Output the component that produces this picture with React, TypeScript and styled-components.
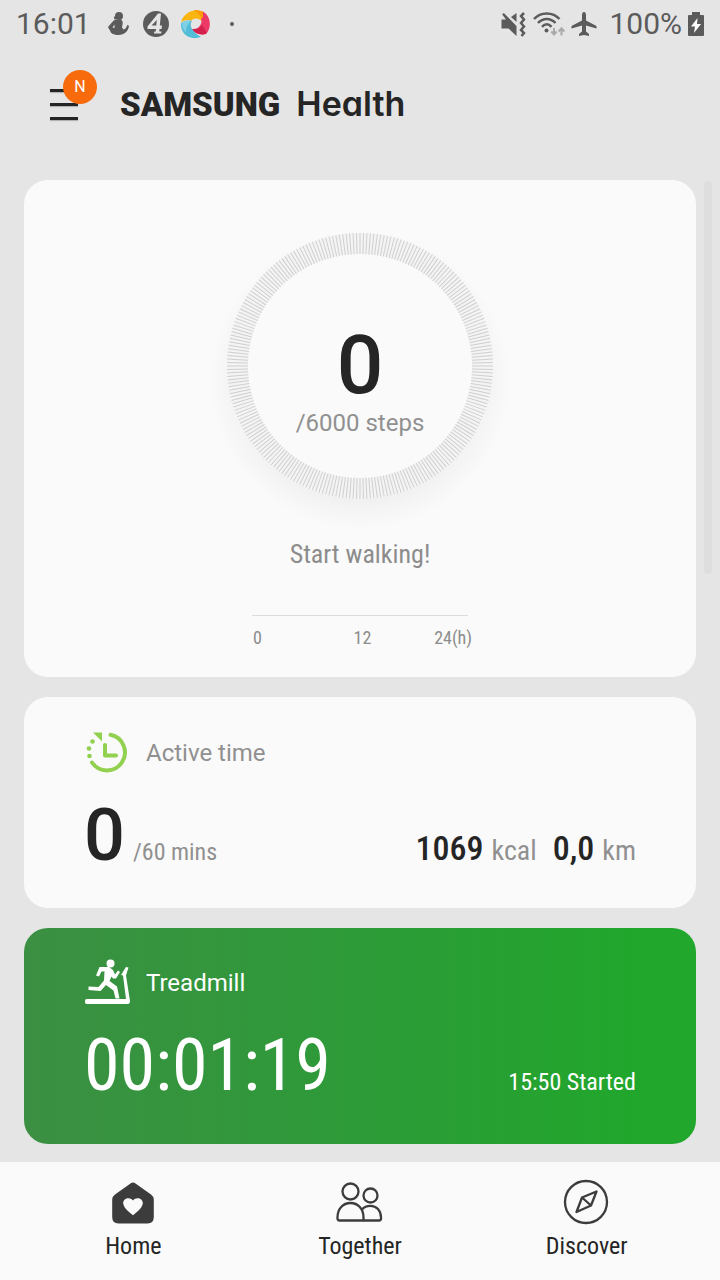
import React from "react";
import styled, { createGlobalStyle } from "styled-components";

const SANS = 'Roboto, "Liberation Sans", sans-serif';
const CONDENSED = '"Roboto Condensed", Roboto, sans-serif';

const GlobalStyle = createGlobalStyle`
  *, *::before, *::after { box-sizing: border-box; }
  body {
    margin: 0;
    background: #e5e5e5;
    color: #252525;
    font-family: ${SANS};
  }
  h1, h2, p { margin: 0; font-weight: 400; }
`;

const Screen = styled.div`
  position: relative;
  display: flex;
  flex-direction: column;
  min-height: 100vh;
`;

const StatusBar = styled.div`
  display: flex;
  align-items: center;
  justify-content: space-between;
  height: 48px;
  padding: 0 16px;
  color: #5b5b5b;
  font-size: 30px;
  line-height: 48px;
`;

const StatusGroup = styled.div<{ $gap: number }>`
  display: flex;
  align-items: center;
  gap: ${(p) => p.$gap}px;
`;

const Clock = styled.time`
  margin-right: 4px;
`;

const ChargeLevel = styled.span`
  margin-left: 6px;
`;

const Icon = styled.svg`
  display: block;
  flex: none;
  overflow: visible;
`;

const Header = styled.header`
  display: flex;
  align-items: center;
  gap: 24px;
  height: 112px;
  padding-left: 48px;
`;

const MenuButton = styled.button`
  position: relative;
  width: 48px;
  height: 48px;
  padding: 0;
  border: 0;
  background: none;
`;

const MenuLine = styled.span`
  display: block;
  width: 28px;
  height: 3px;
  margin: 0 0 11px 2px;
  background: #252525;
  box-shadow: 0 1px 1px rgba(0, 0, 0, 0.25);

  &:nth-of-type(3) { margin-bottom: 0; }
`;

const Badge = styled.span`
  position: absolute;
  top: -10px;
  left: 15px;
  width: 34px;
  height: 34px;
  border-radius: 50%;
  background: #f76b0d;
  color: #fff;
  font: 400 16px/34px ${SANS};
  text-align: center;
`;

const Brand = styled.h1`
  display: flex;
  align-items: baseline;
  gap: 16px;
  line-height: 40px;
`;

const BrandMaker = styled.span`
  font-size: 33px;
  font-weight: 900;
`;

const BrandProduct = styled.span`
  font-family: Inter, ${SANS};
  font-size: 34px;
  font-weight: 600;
  font-feature-settings: "cv11";
`;

const Cards = styled.main`
  display: flex;
  flex-direction: column;
  gap: 20px;
  padding: 20px 24px 18px;
`;

const ScrollThumb = styled.div`
  position: absolute;
  top: 181px;
  right: 8px;
  width: 8px;
  height: 393px;
  border-radius: 4px;
  background: #dedede;
`;

const Card = styled.section`
  border-radius: 24px;
  background: #fafafa;
`;

const StepsCard = styled(Card)`
  display: flex;
  flex-direction: column;
  align-items: center;
  padding: 32px 24px 28px;
`;

const Gauge = styled.div`
  display: grid;
  justify-items: center;
  width: 308px;

  > * { grid-area: 1 / 1; }
`;

const GaugeText = styled.div`
  display: flex;
  flex-direction: column;
  align-items: center;
  padding-top: 109px;
`;

const BigNumber = styled.strong<{ $size: number }>`
  font-size: ${(p) => p.$size}px;
  line-height: 88px;
  font-weight: 500;
  color: #252525;
`;

const Goal = styled.p`
  font-size: 24px;
  line-height: 28px;
  color: #909090;
`;

const Hint = styled.p`
  margin-top: 18px;
  font-family: ${CONDENSED};
  font-size: 26px;
  line-height: 32px;
  color: #8c8c8c;
`;

const HourAxis = styled.div`
  display: flex;
  justify-content: space-between;
  width: 224px;
  margin-top: 45px;
  padding: 12px 0 0 5px;
  background: linear-gradient(#dcdcdc, #dcdcdc) 4px 0 / 216px 1px no-repeat;
  font-family: ${CONDENSED};
  font-size: 18px;
  line-height: 22px;
  color: #8c8c8c;

  > * { flex: 1; text-align: center; }
  > :first-child { text-align: left; }
  > :last-child { text-align: right; }
`;

const ActiveCard = styled(Card)`
  padding: 32px 60px 28px;
`;

const TreadmillCard = styled(Card)`
  padding: 31px 60px 34px;
  background: linear-gradient(90deg, #3b8f42, #2d9b38 50%, #21a72c 92%);
  color: #fff;
`;

const CardTitle = styled.div`
  display: flex;
  align-items: center;
  gap: 16px;
  height: 48px;
`;

const CardName = styled.h2<{ $color: string }>`
  font-size: 24px;
  line-height: 32px;
  color: ${(p) => p.$color};
`;

const CardValues = styled.div`
  display: flex;
  align-items: baseline;
  justify-content: space-between;
  margin-top: 15px;
`;

const Measure = styled.p`
  display: flex;
  align-items: baseline;
  gap: 8px;
`;

const Totals = styled.div`
  display: flex;
  gap: 16px;
`;

const Figure = styled.strong`
  font-family: ${CONDENSED};
  font-size: 34px;
  line-height: 40px;
  font-weight: 500;
`;

const Unit = styled.span<{ $size: number }>`
  font-family: ${CONDENSED};
  font-size: ${(p) => p.$size}px;
  color: #909090;
`;

const Timer = styled.strong`
  font-family: ${CONDENSED};
  font-size: 72px;
  line-height: 88px;
  font-weight: 400;
`;

const Started = styled.span`
  font-family: ${CONDENSED};
  font-size: 24px;
`;

const TabBar = styled.nav`
  display: grid;
  grid-template-columns: repeat(3, 1fr);
  margin-top: auto;
  padding: 16px 20px 18px;
  background: #fafafa;
`;

const Tab = styled.a`
  display: flex;
  flex-direction: column;
  align-items: center;
  gap: 4px;
  color: #252525;
  font-family: ${CONDENSED};
  font-size: 24px;
  line-height: 32px;
  text-decoration: none;
`;

function KneelingFigureIcon() {
  return (
    <Icon width="24" height="26" viewBox="0 0 24 26" fill="#5b5b5b" aria-hidden="true">
      <circle cx="12" cy="5" r="4" />
      <path d="M8.500 5C7 5 6.500 7 7.500 8.500L10 8Z" />
      <path d="M9 8.500C7 8.800 6 10.500 4 12.500L1 16C1.500 17.500 2.500 18.500 3 19.500 3.500 22.500 7 24 11.500 24 17.500 24 21 20.500 22 15L20.500 13.800C19.500 16.500 18.500 18.300 16.500 18.500L15 16.500 15.800 11.500 14.500 8.500Z" />
      <path d="M7.500 13.500 5.500 16.500 7.500 17Z" fill="#e5e5e5" />
    </Icon>
  );
}

function ChannelIcon() {
  return (
    <Icon width="26" height="26" viewBox="0 0 26 26" aria-hidden="true">
      <circle cx="13" cy="13" r="13" fill="#5b5b5b" />
      <path
        fill="#e5e5e5"
        fillRule="evenodd"
        d="M15 2.500H18L16.800 14.500H19L18.500 18H16.500L16.300 20.500H18.500L18.200 22.500H11L11.300 20.500H12.800L13 18H4.500V15.500ZM13.800 9 8.500 14.500H13.300Z"
      />
    </Icon>
  );
}

function PinwheelIcon() {
  return (
    <Icon width="29" height="30" viewBox="0 0 29 30" aria-hidden="true">
      <path fill="#fbb511" d="M0 13C3 4 11-1 22 2.500V13C18 9 13 8 10 12 7 10 4 11 0 13Z" />
      <path fill="#ff9a05" d="M12 1Q17 .5 22 2.500V13C20 7 17 3 12 1Z" />
      <path fill="#ec3a66" d="M22 2.500C30 7 31 19 25 25 20 27 13 24 11 20 17 21 22 15 20 10L22 8Z" />
      <path fill="#d4204c" d="M11 20C15 21 19 19.500 21 16L26 24C20 27 13 24 11 20Z" />
      <path fill="#53bdd8" d="M0 14C4 11 8 11 11 12 8 16 10 22 20 28 9 32-1 25 0 14Z" />
      <path fill="#7fd0e4" d="M1 14C4 11.500 8 11 11 12 7 14 5 18 5 23 2 21 1 18 1 14Z" />
    </Icon>
  );
}

function OverflowDot() {
  return (
    <Icon width="20" height="8" viewBox="0 0 20 8" aria-hidden="true">
      <circle cx="10" cy="4" r="2" fill="#5b5b5b" />
    </Icon>
  );
}

function MuteVibrateIcon() {
  return (
    <Icon width="26" height="26" viewBox="0 0 26 26" fill="#5b5b5b" aria-hidden="true">
      <path d="M.5 8.500H5L1.200 3.500 2.800 2 15.500 15V25L7.500 17.500H.5Z" />
      <path d="M15.500 2V11L10 6Z" />
      <path d="M23 2 20 5 23 8.500 20 12 23 15.500 20 19 23 22 20.500 25" fill="none" stroke="#5b5b5b" strokeWidth="2.500" />
    </Icon>
  );
}

function WifiIcon() {
  return (
    <Icon width="32" height="26" viewBox="0 0 32 26" fill="none" stroke="#5b5b5b" strokeWidth="2.500" aria-hidden="true">
      <path d="M1 8C7.500.5 20 .5 26.500 8" />
      <path d="M5 12C10 6.500 17.500 6.500 22.500 12" />
      <path d="M9 15.800C12 12.500 15.500 12.500 18.500 15.800" />
      <circle cx="13.500" cy="19.500" r="2" fill="#5b5b5b" stroke="none" />
      <path d="M21 17V23M18.300 20.500 21 23.500 23.700 20.500M28.500 24.500V17.500M25.700 20.500 28.500 17.200 31.300 20.500" stroke="#aaa" strokeWidth="2" />
    </Icon>
  );
}

function AirplaneIcon() {
  return (
    <Icon width="26" height="26" viewBox="0 0 26 26" fill="#5b5b5b" aria-hidden="true">
      <path d="M13 1C14.500 1 15 2.500 15 4V9.500L25.500 15V17.500L15 14.500V20.500L18 23V25L13 24 8 25V23L11 20.500V14.500L.5 17.500V15L11 9.500V4C11 2.500 11.500 1 13 1Z" />
    </Icon>
  );
}

function BatteryIcon() {
  return (
    <Icon width="16" height="24" viewBox="0 0 16 24" aria-hidden="true">
      <path fill="#5b5b5b" d="M4 0H12V3H15Q16 3 16 4V23Q16 24 15 24H1Q0 24 0 23V4Q0 3 1 3H4Z" />
      <path fill="#fff" d="M9.500 6 3 14.500H7L6 21 13 12H9Z" />
    </Icon>
  );
}

const TICKS = Array.from({ length: 240 }, (_, i) => i * 1.5);

function StepsRing() {
  return (
    <Icon width="308" height="308" viewBox="0 0 308 308" aria-hidden="true">
      <defs>
        <radialGradient id="ring-shadow">
          <stop offset="0.74" stopColor="#ededed" />
          <stop offset="0.86" stopColor="#f4f4f4" />
          <stop offset="1" stopColor="#fafafa" />
        </radialGradient>
      </defs>
      <circle cx="154" cy="168" r="150" fill="url(#ring-shadow)" />
      <circle cx="154" cy="154" r="133" fill="#fafafa" />
      <circle cx="154" cy="154" r="122.500" fill="none" stroke="#f4f4f4" strokeWidth="21" />
      <g stroke="#cfcfcf" strokeWidth="1">
        {TICKS.map((angle) => (
          <line key={angle} x1="154" y1="21" x2="154" y2="42" transform={`rotate(${angle} 154 154)`} />
        ))}
      </g>
    </Icon>
  );
}

function ActiveTimeIcon() {
  return (
    <Icon width="46" height="48" viewBox="0 0 46 48" fill="none" stroke="#92d050" strokeWidth="4" strokeLinecap="round" aria-hidden="true">
      <path d="M26.500 5.800A18 18 0 1 1 8 33.500" />
      <path d="M21 16V26.500H32" strokeLinejoin="round" />
      <path d="M9 3.500H18V12.500Z" fill="#92d050" stroke="none" />
      <g fill="#92d050" stroke="none">
        <circle cx="8.500" cy="12.500" r="2.300" />
        <circle cx="5" cy="19.500" r="2.300" />
        <circle cx="5.500" cy="27" r="2.300" />
      </g>
    </Icon>
  );
}

function TreadmillIcon() {
  return (
    <Icon width="46" height="48" viewBox="0 0 46 48" fill="#fff" aria-hidden="true">
      <circle cx="26.500" cy="4.500" r="4" />
      <path d="M15.500 8H25L29 11 31 15.500 34 11.500 36 13 32 19.500 29 19.500 27.500 17.500 25.500 22 33 27.500 35.500 39.500H31.500L29.500 31.500 22 26 16.500 32 4.500 31V27.500L14.500 28 20 21.500 20.500 12.500H17.500L15 17.500 12 16.500Z" />
      <path d="M2.500 40H42L39 16.500 37 16 42 8 44.500 8.500 42 16.500 46 42Q46 45 44 45H2.500Q1 45 1 43V42Q1 40 2.500 40Z" />
    </Icon>
  );
}

function HomeIcon() {
  return (
    <Icon width="48" height="48" viewBox="0 0 48 48" aria-hidden="true">
      <path
        fill="#3c3c3c"
        d="M21.500 5.500Q24 3.500 26.500 5.500L42 16.500Q44.800 18.500 44.800 21.500V39Q44.800 45.500 38.500 45.500H9.500Q3.200 45.500 3.200 39V21.500Q3.200 18.500 6 16.500Z"
      />
      <path fill="#fafafa" d="M24 37.200C19 33.500 14.200 29 14.200 25 14.200 20 21 18.500 24 22.500 27 18.500 33.800 20 33.800 25 33.800 29 29 33.500 24 37.200Z" />
    </Icon>
  );
}

function TogetherIcon() {
  return (
    <Icon width="48" height="48" viewBox="0 0 48 48" fill="none" stroke="#3c3c3c" strokeWidth="2.300" strokeLinejoin="round" aria-hidden="true">
      <circle cx="14.500" cy="13.500" r="8" />
      <circle cx="34.500" cy="17.500" r="7" />
      <path d="M1.500 39.500C1.500 31 7 25 14.500 25S27.500 31 27.500 39.500V42.500H3.500Q1.500 42.500 1.500 40.500Z" />
      <path d="M26 31.500C28 29 31 27.800 34.500 27.800 40.500 27.800 45 32.500 45 39.500V40.500Q45 42.500 43 42.500H27.500" />
    </Icon>
  );
}

function DiscoverIcon() {
  return (
    <Icon width="48" height="48" viewBox="0 0 48 48" fill="none" stroke="#3c3c3c" strokeWidth="2.300" strokeLinejoin="round" aria-hidden="true">
      <circle cx="23" cy="24" r="21" />
      <path d="M33.500 13.500 28 27.500 13.500 34 19 19.500ZM19 19.500 28 27.500" />
    </Icon>
  );
}

export default function App() {
  return (
    <>
      <GlobalStyle />
      <Screen>
        <StatusBar>
          <StatusGroup $gap={12}>
            <Clock>16:01</Clock>
            <KneelingFigureIcon />
            <ChannelIcon />
            <PinwheelIcon />
            <OverflowDot />
          </StatusGroup>
          <StatusGroup $gap={6}>
            <MuteVibrateIcon />
            <WifiIcon />
            <AirplaneIcon />
            <ChargeLevel>100%</ChargeLevel>
            <BatteryIcon />
          </StatusGroup>
        </StatusBar>

        <Header>
          <MenuButton type="button" aria-label="Menu, new items">
            <MenuLine />
            <MenuLine />
            <MenuLine />
            <Badge>N</Badge>
          </MenuButton>
          <Brand>
            <BrandMaker>SAMSUNG</BrandMaker>
            <BrandProduct>Health</BrandProduct>
          </Brand>
        </Header>

        <Cards>
          <StepsCard>
            <Gauge>
              <StepsRing />
              <GaugeText>
                <BigNumber $size={82}>0</BigNumber>
                <Goal>/6000 steps</Goal>
              </GaugeText>
            </Gauge>
            <Hint>Start walking!</Hint>
            <HourAxis>
              <span>0</span>
              <span>12</span>
              <span>24(h)</span>
            </HourAxis>
          </StepsCard>

          <ActiveCard>
            <CardTitle>
              <ActiveTimeIcon />
              <CardName $color="#909090">Active time</CardName>
            </CardTitle>
            <CardValues>
              <Measure>
                <BigNumber $size={72}>0</BigNumber>
                <Unit $size={24}>/60 mins</Unit>
              </Measure>
              <Totals>
                <Measure>
                  <Figure>1069</Figure>
                  <Unit $size={28}>kcal</Unit>
                </Measure>
                <Measure>
                  <Figure>0,0</Figure>
                  <Unit $size={28}>km</Unit>
                </Measure>
              </Totals>
            </CardValues>
          </ActiveCard>

          <TreadmillCard>
            <CardTitle>
              <TreadmillIcon />
              <CardName $color="#fff">Treadmill</CardName>
            </CardTitle>
            <CardValues>
              <Timer>00:01:19</Timer>
              <Started>15:50 Started</Started>
            </CardValues>
          </TreadmillCard>
        </Cards>
        <ScrollThumb aria-hidden="true" />

        <TabBar>
          <Tab href="#home" aria-current="page">
            <HomeIcon />
            Home
          </Tab>
          <Tab href="#together">
            <TogetherIcon />
            Together
          </Tab>
          <Tab href="#discover">
            <DiscoverIcon />
            Discover
          </Tab>
        </TabBar>
      </Screen>
    </>
  );
}
